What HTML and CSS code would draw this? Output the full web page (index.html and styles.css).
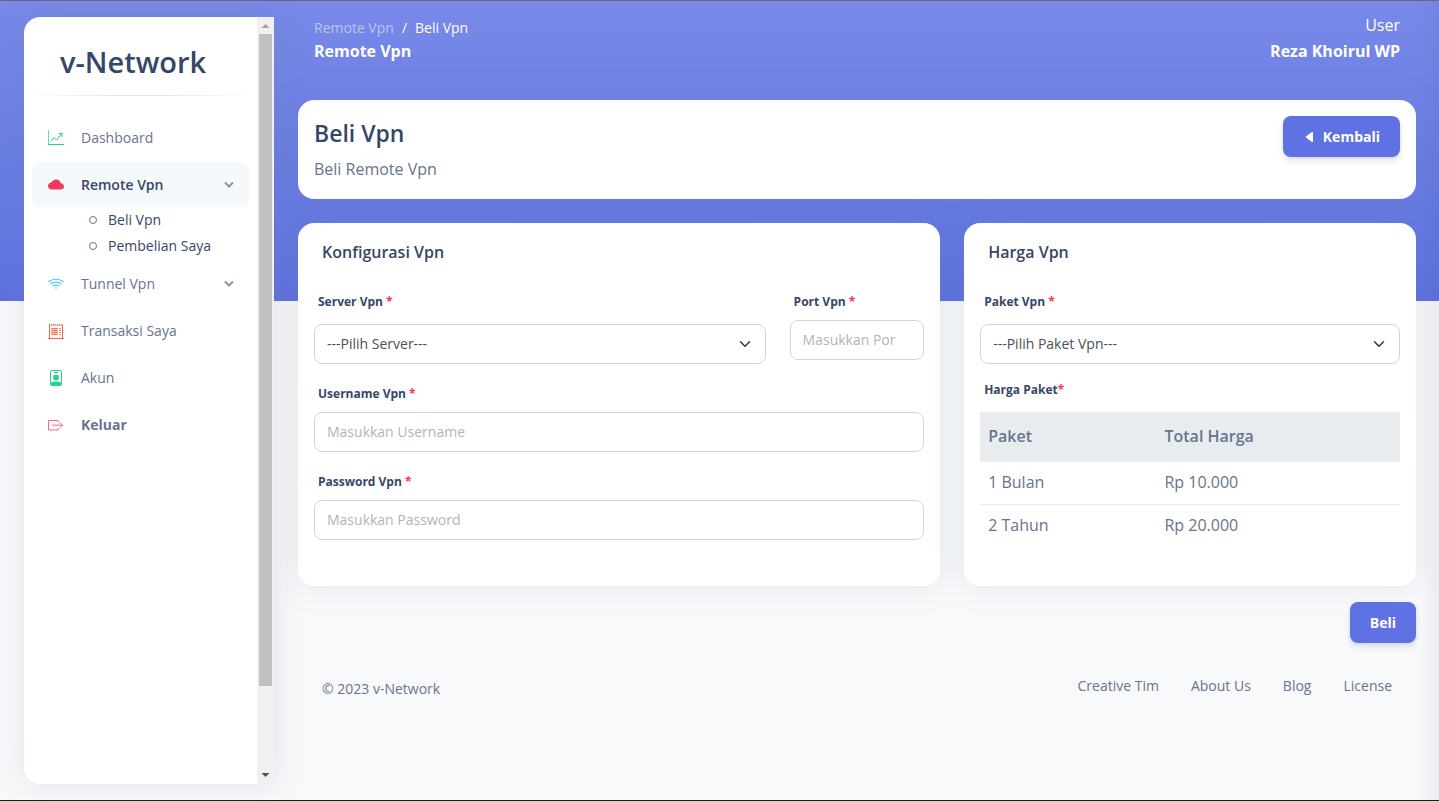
FILE: index.html
```html
<!DOCTYPE html>
<html lang="id">
<head>
<meta charset="utf-8">
<meta name="viewport" content="width=device-width, initial-scale=1">
<title>v-Network - Beli Vpn</title>
<link rel="stylesheet" href="styles.css">
</head>
<body>
<div class="app">
  <aside class="sidebar">
    <div class="sidebar-body">
      <h1 class="brand">v-Network</h1>
      <hr class="divider">
      <nav class="nav" aria-label="Menu">
        <a class="nav-item" href="#dashboard">
          <svg class="icon" viewBox="0 0 16 16" fill="none" stroke="#2dce89"><path d="M.5 0v15.500" stroke-opacity=".7"/><path d="M0 14.500h16"/><path d="M3 11.500l3-4 2.500 2.500L14 3.500M10.500 3.500H14V7"/></svg>
          <span class="nav-text">Dashboard</span>
        </a>
        <button class="nav-item active" type="button" aria-expanded="true">
          <svg class="icon" viewBox="0 0 16 16" fill="#f5365c"><path d="M4.400 4.300A4.500 4.500 0 0 1 8 2.500c2.400 0 4.400 1.500 4.700 3.800C14.500 6.500 16 7.900 16 9.600 16 11.400 14.500 12.500 12.700 12.500H3.800C1.700 12.500 0 11.200 0 9.100c0-1.800 1.300-3.200 3-3.600.2-.3.700-.8 1.400-1.200z"/></svg>
          <span class="nav-text">Remote Vpn</span>
          <svg class="chevron" viewBox="0 0 10 8" fill="none" stroke="#8a94a6" stroke-width="2"><path d="M1 1.500l4 4 4-4"/></svg>
        </button>
        <ul class="subnav">
          <li><a href="#beli"><span class="dot"></span>Beli Vpn</a></li>
          <li><a href="#pembelian"><span class="dot"></span>Pembelian Saya</a></li>
        </ul>
        <button class="nav-item" type="button" aria-expanded="false">
          <svg class="icon" viewBox="0 0 16 16" fill="none" stroke="#45c0ee" stroke-width="1.200" stroke-linecap="round"><path d="M1 5.500q7-5 14 0M3 7.800q5-3.600 10 0M5.200 10q2.800-2 5.600 0"/><circle cx="8" cy="12" r=".8" fill="#45c0ee" stroke="none"/></svg>
          <span class="nav-text">Tunnel Vpn</span>
          <svg class="chevron" viewBox="0 0 10 8" fill="none" stroke="#8a94a6" stroke-width="2"><path d="M1 1.500l4 4 4-4"/></svg>
        </button>
        <a class="nav-item" href="#transaksi">
          <svg class="icon" viewBox="0 0 16 16" fill="none" stroke="#fb6340"><path d="M1.500 1.500v14M14.500 1.500v14M0 15.500h16"/><path d="M1 1.500h14" stroke-dasharray="1 1"/><path d="M1.500 2.500h13" stroke-opacity=".5"/><path d="M3.500 5.500h6M3.500 7.500h6M3.500 9.500h6M3.500 11.500h6M11 5.500h2M11 7.500h2M11 9.500h2M11 11.500h2" stroke-opacity=".8"/><path d="M3 5h7v7H3z" fill="#fb6340" fill-opacity=".4" stroke="none"/></svg>
          <span class="nav-text">Transaksi Saya</span>
        </a>
        <a class="nav-item" href="#akun">
          <svg class="icon" viewBox="0 0 16 16"><rect x="2.500" y=".5" width="11" height="15" rx="1.500" fill="none" stroke="#2dce89"/><path d="M6 2.500h4" stroke="#2dce89"/><circle cx="8" cy="7.500" r="3" fill="#2dce89"/><path d="M2.500 13.500C4 11.500 6 11.500 8 11.500s4 0 5.500 2V14a1.500 1.500 0 0 1-1.500 1.500H4A1.500 1.500 0 0 1 2.500 14z" fill="#2dce89"/></svg>
          <span class="nav-text">Akun</span>
        </a>
        <a class="nav-item strong" href="#keluar">
          <svg class="icon" viewBox="0 0 16 16" fill="none" stroke="#f5365c" stroke-opacity=".75"><path d="M10 5.500V3.500H.5v9.500H10v-2"/><path d="M4 8.200h10.500M11.500 5.200l3 3-3 3"/></svg>
          <span class="nav-text">Keluar</span>
        </a>
      </nav>
    </div>
    <div class="scrollbar" aria-hidden="true">
      <svg class="scroll-arrow" viewBox="0 0 17 17"><path d="M4.500 11h8L8.500 7z" fill="#a3a3a3"/></svg>
      <div class="scroll-track"><div class="scroll-thumb"></div></div>
      <svg class="scroll-arrow" viewBox="0 0 17 17"><path d="M4.500 6h8l-4 4z" fill="#505050"/></svg>
    </div>
  </aside>

  <main class="main">
    <header class="topbar">
      <div class="crumbs">
        <nav class="breadcrumb" aria-label="Breadcrumb"><a href="#remote">Remote Vpn</a><span>/</span><span>Beli Vpn</span></nav>
        <p class="page-name">Remote Vpn</p>
      </div>
      <div class="account"><p>User</p><p class="account-name">Reza Khoirul WP</p></div>
    </header>

    <section class="card intro">
      <div>
        <h2 class="intro-title">Beli Vpn</h2>
        <p class="intro-text">Beli Remote Vpn</p>
      </div>
      <a class="btn" href="#kembali"><svg class="caret" viewBox="0 0 8 12" fill="#fff"><path d="M8 1.500v9a.6.600 0 0 1-1 .4L.9 6.500a.7.700 0 0 1 0-1L7 1.100a.6.600 0 0 1 1 .4z"/></svg>Kembali</a>
    </section>

    <form class="order">
      <div class="row">
        <div class="col-7">
          <section class="card panel">
            <h3 class="panel-title">Konfigurasi Vpn</h3>
            <div class="fields">
              <div class="row">
                <div class="col-9 field tall">
                  <label for="server">Server Vpn <span class="req">*</span></label>
                  <select id="server" class="control"><option>---Pilih Server---</option></select>
                </div>
                <div class="col-3 field">
                  <label for="port">Port Vpn <span class="req">*</span></label>
                  <input id="port" class="control" type="text" placeholder="Masukkan Por">
                </div>
              </div>
              <div class="field">
                <label for="username">Username Vpn <span class="req">*</span></label>
                <input id="username" class="control" type="text" placeholder="Masukkan Username">
              </div>
              <div class="field">
                <label for="password">Password Vpn <span class="req">*</span></label>
                <input id="password" class="control" type="password" placeholder="Masukkan Password">
              </div>
            </div>
          </section>
        </div>
        <div class="col-5">
          <section class="card panel">
            <h3 class="panel-title">Harga Vpn</h3>
            <div class="fields compact">
              <div class="field tall">
                <label for="paket">Paket Vpn <span class="req">*</span></label>
                <select id="paket" class="control"><option>---Pilih Paket Vpn---</option></select>
              </div>
              <div class="field tall">
                <p class="label" id="harga">Harga Paket<span class="req">*</span></p>
                <table class="prices" aria-labelledby="harga">
                  <thead><tr><th>Paket</th><th>Total Harga</th></tr></thead>
                  <tbody>
                    <tr><td>1 Bulan</td><td>Rp 10.000</td></tr>
                    <tr><td>2 Tahun</td><td>Rp 20.000</td></tr>
                  </tbody>
                </table>
              </div>
            </div>
          </section>
        </div>
      </div>
      <div class="actions"><button class="btn" type="submit">Beli</button></div>
    </form>

    <footer class="footer">
      <p class="copyright">© 2023 v-Network</p>
      <nav class="footer-links" aria-label="Footer">
        <a href="#tim">Creative Tim</a><a href="#about">About Us</a><a href="#blog">Blog</a><a href="#license">License</a>
      </nav>
    </footer>
  </main>
</div>
</body>
</html>
```

FILE: styles.css
```css
* { box-sizing: border-box; }

body {
  margin: 0;
  font-family: "Open Sans", "Noto Sans", sans-serif;
  font-size: 16px;
  line-height: 26px;
  color: #67748e;
  background: #f8f9fb;
}

h1, h2, h3, p, ul { margin: 0; padding: 0; }
a { color: inherit; text-decoration: none; }
button, input, select { font: inherit; color: inherit; }

.app {
  display: flex;
  min-height: 100vh;
  border-top: 1px solid #666a86;
  border-bottom: 1px solid #1c1c1e;
  background:
    linear-gradient(to left, rgba(60, 70, 100, 0.07), transparent) right top / 20px 100% no-repeat,
    linear-gradient(#7889e8, #5e72e0) left top / 100% 300px no-repeat;
}

/* Sidebar */
.sidebar {
  display: flex;
  flex: 0 0 250px;
  margin: 16px 0 16px 24px;
  background: #fff;
  border-radius: 16px 0 0 16px;
  box-shadow: 0 0 32px rgba(110, 125, 145, 0.18);
}
.sidebar-body { flex: 1; min-width: 0; }
.brand {
  padding: 26px 36px 14px;
  font-size: 29px;
  line-height: 38px;
  font-weight: 600;
  color: #344767;
}
.divider {
  height: 1px;
  margin: 0 0 19px;
  border: 0;
  background: linear-gradient(to right, transparent, #dfe0e2, transparent);
}
.nav {
  display: flex;
  flex-direction: column;
  gap: 2px;
  padding: 0 8px;
  font-size: 14px;
}
.nav-item {
  display: flex;
  align-items: center;
  height: 45px;
  padding: 0 15px 0 16px;
  border: 0;
  border-radius: 8px;
  background: none;
  text-align: left;
  cursor: pointer;
}
.nav-item.active { background: #f6f9fc; color: #344767; font-weight: 600; }
.nav-item.strong { font-weight: 700; }
.nav-text { flex: 1; }
.icon { width: 16px; height: 16px; margin-right: 17px; }
.chevron { width: 10px; height: 8px; }
.subnav { list-style: none; margin-top: -2px; color: #344767; }
.subnav a { display: flex; align-items: center; padding-left: 57px; }
.dot {
  width: 8px;
  height: 8px;
  margin-right: 11px;
  border: 1px solid #67748e;
  border-radius: 50%;
}

.scrollbar {
  display: flex;
  flex: 0 0 17px;
  flex-direction: column;
  background: #f1f1f1;
}
.scroll-arrow { width: 17px; height: 17px; }
.scroll-track { flex: 1; padding: 0 2px; }
.scroll-thumb { height: 89%; background: #c1c1c1; }

/* Main column */
.main { flex: 1; min-width: 0; padding: 0 23px 0 24px; }

.topbar {
  display: flex;
  justify-content: space-between;
  padding: 11px 16px 36px;
  color: #fff;
}
.crumbs { padding-top: 4px; }
.breadcrumb {
  display: flex;
  gap: 8px;
  font-size: 14px;
  line-height: 24px;
}
.breadcrumb a { opacity: 0.5; }
.page-name { font-weight: 700; line-height: 22px; }
.account { text-align: right; }
.account-name { font-weight: 700; }

.card {
  background: #fff;
  border-radius: 16px;
  box-shadow: 0 0 32px rgba(110, 125, 145, 0.15);
}
.intro {
  display: flex;
  justify-content: space-between;
  align-items: flex-start;
  padding: 16px 16px 17px;
  margin-bottom: 24px;
}
.intro-title { font-size: 23px; line-height: 34px; font-weight: 600; color: #344767; }
.intro-text { margin-top: 6px; }

.btn {
  display: inline-flex;
  align-items: center;
  height: 41px;
  padding: 0 20px;
  border: 0;
  border-radius: 8px;
  background: #5e72e4;
  box-shadow: 0 4px 6px rgba(50, 50, 93, 0.12), 0 1px 3px rgba(0, 0, 0, 0.08);
  color: #fff;
  font-size: 14px;
  font-weight: 700;
  cursor: pointer;
}
.caret { width: 8px; height: 12px; margin: 0 10px 0 2px; }

.row { display: flex; margin: 0 -12px; }
.row > * { padding: 0 12px; }
.col-7 { width: 58.333%; }
.col-5 { width: 41.667%; }
.col-9 { width: 75%; }
.col-3 { width: 25%; }

.panel { height: 100%; padding: 16px 16px 39px; }
.panel-title {
  padding: 0 8px;
  margin-bottom: 27px;
  font-size: 16px;
  line-height: 26px;
  font-weight: 600;
  color: #344767;
}
.fields { display: flex; flex-direction: column; gap: 20px; }
.fields.compact { gap: 16px; }
.field label, .label {
  display: block;
  margin-bottom: 8px;
  padding-left: 4px;
  font-size: 12px;
  line-height: 20px;
  font-weight: 700;
  color: #344767;
}
.field.tall label, .tall .label { margin-bottom: 12px; }
.req { color: #f5365c; }

.control {
  display: block;
  width: 100%;
  height: 40px;
  padding: 0 12px 2px;
  border: 1px solid #d2d6da;
  border-radius: 8px;
  background: #fff;
  font-size: 14px;
  line-height: 20px;
  color: #495057;
}
.control::placeholder { color: #adb5bd; opacity: 1; }
select.control {
  appearance: none;
  padding-bottom: 0;
  background: #fff url("data:image/svg+xml,%3Csvg xmlns='http://www.w3.org/2000/svg' viewBox='0 0 16 16'%3E%3Cpath fill='none' stroke='%23343a40' stroke-linecap='round' stroke-linejoin='round' stroke-width='2' d='M2 5l6 6 6-6'/%3E%3C/svg%3E") right 14px center / 12px 12px no-repeat;
}

.prices { width: 100%; border-collapse: collapse; table-layout: fixed; }
.prices th, .prices td { padding: 7px 8px 9px; text-align: left; }
.prices th { padding: 11px 8px 13px; font-weight: 600; background: #e9ecef; }
.prices th:first-child { width: 42%; }
.prices tbody tr + tr td { border-top: 1px solid #e9ecef; }

.actions { display: flex; justify-content: flex-end; padding-top: 16px; }

.footer {
  display: flex;
  justify-content: space-between;
  padding: 30px 24px 24px;
  font-size: 14px;
}
.copyright { padding-top: 3px; }
.footer-links { display: flex; gap: 32px; }
```
